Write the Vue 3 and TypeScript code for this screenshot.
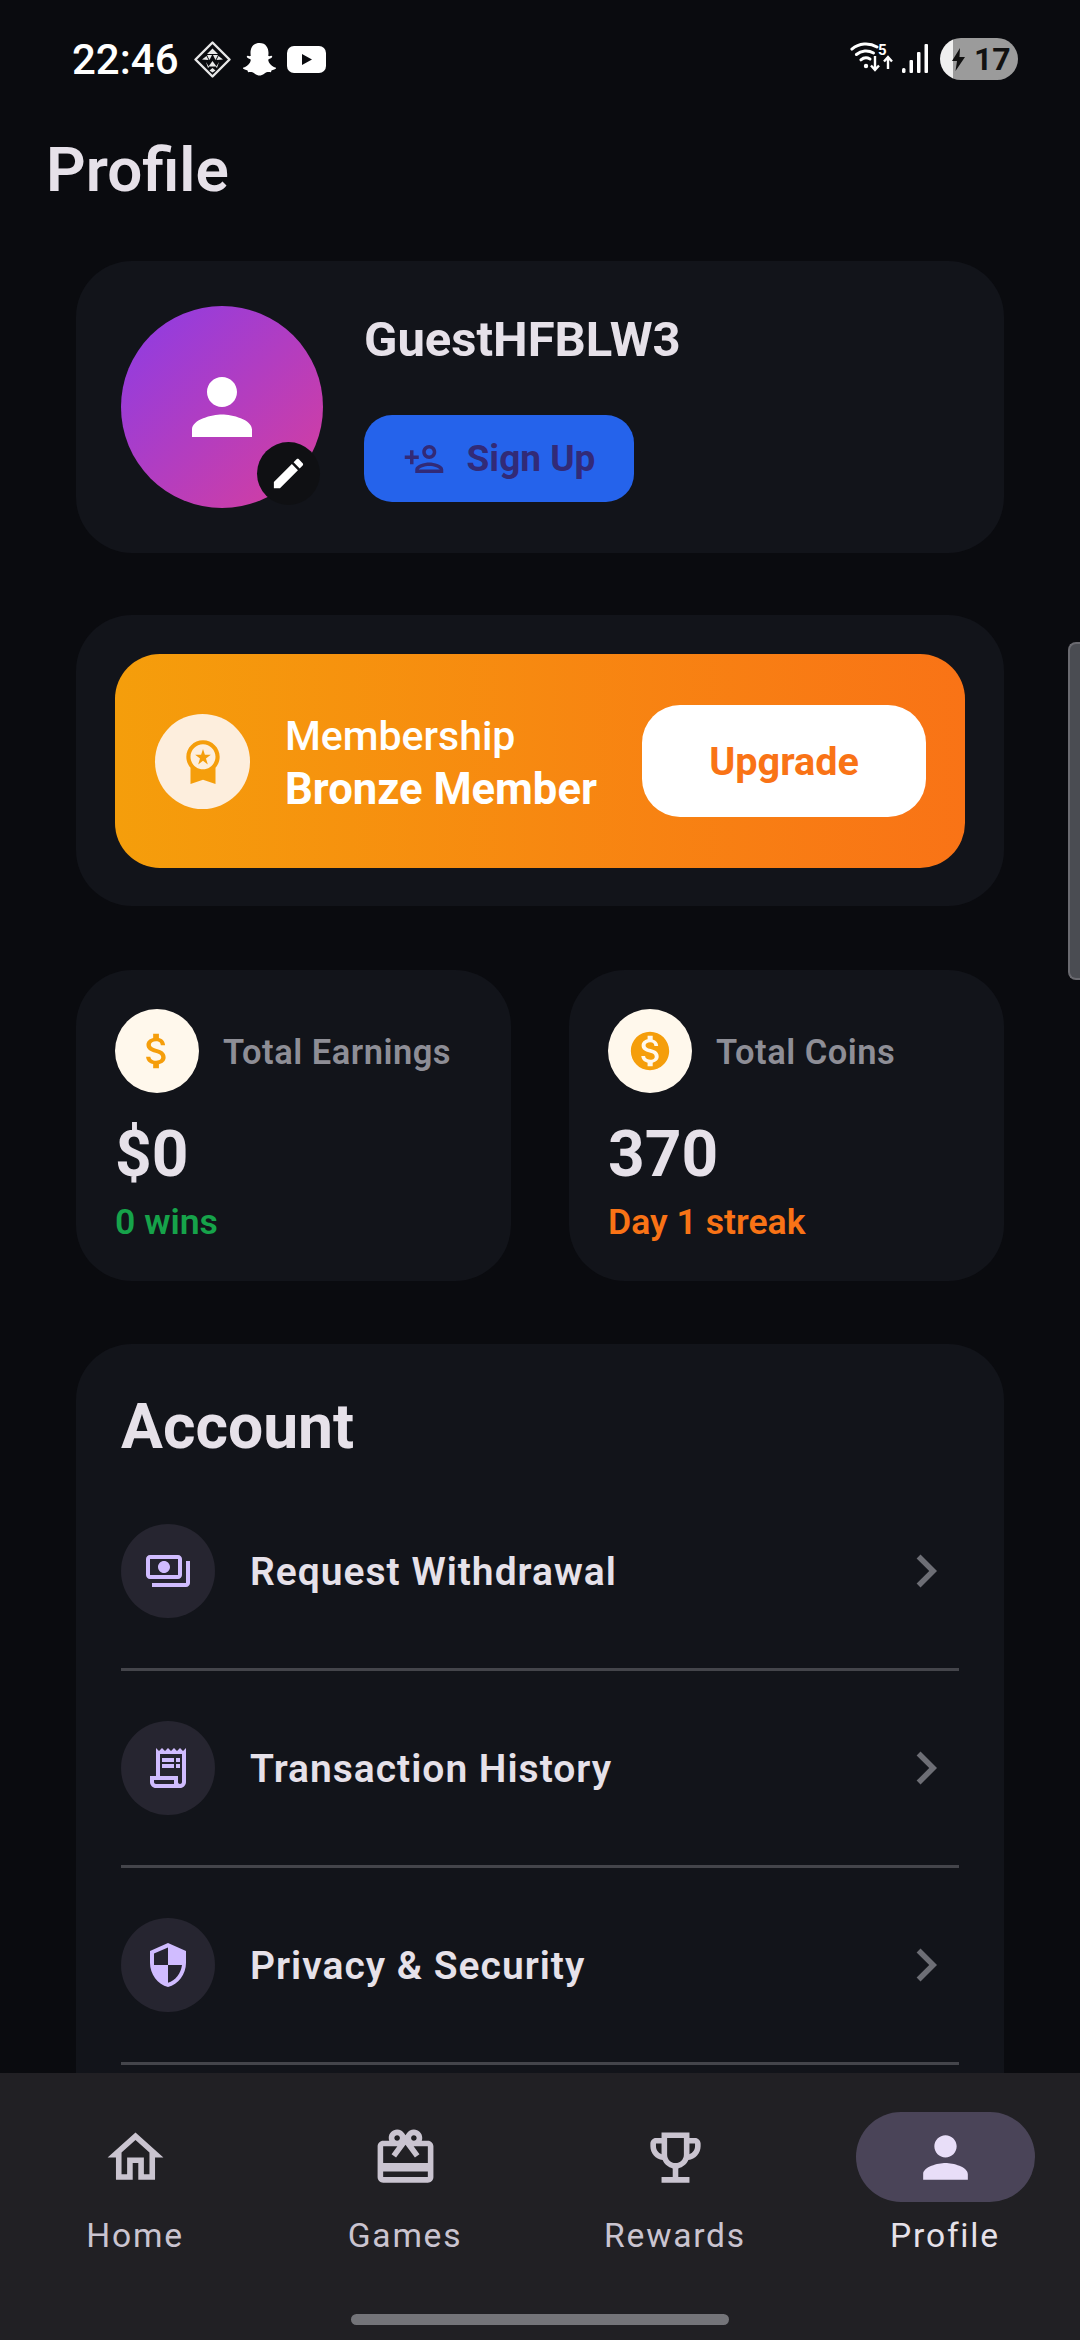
<script setup lang="ts">
const icons = {
  person: "M12 12c2.21 0 4-1.79 4-4s-1.79-4-4-4-4 1.79-4 4 1.79 4 4 4zm0 2c-2.67 0-8 1.34-8 4v2h16v-2c0-2.66-5.33-4-8-4z",
  edit: "M3 17.25V21h3.75L17.81 9.94l-3.75-3.75L3 17.25zM20.71 7.04c.39-.39.39-1.02 0-1.41l-2.34-2.34c-.39-.39-1.02-.39-1.41 0l-1.83 1.83 3.75 3.75 1.83-1.83z",
  personAdd: "M15 6c1.1 0 2 .9 2 2s-.9 2-2 2-2-.9-2-2 .9-2 2-2m0 10c2.7 0 5.8 1.29 6 2H9c.23-.72 3.31-2 6-2M15 4c-2.21 0-4 1.79-4 4s1.79 4 4 4 4-1.79 4-4-1.79-4-4-4zm0 10c-2.67 0-8 1.34-8 4v2h16v-2c0-2.66-5.33-4-8-4zM6 10V7H4v3H1v2h3v3h2v-3h3v-2H6z",
  medal: "M9.68 13.69 12 11.93l2.31 1.76-.88-2.85L15.75 9h-2.84L12 6.19 11.09 9H8.25l2.31 1.84-.88 2.85zM20 10c0-4.42-3.58-8-8-8s-8 3.58-8 8c0 2.03.76 3.87 2 5.28V23l6-2 6 2v-7.72c1.24-1.41 2-3.25 2-5.28zm-8-6c3.31 0 6 2.69 6 6s-2.69 6-6 6-6-2.69-6-6 2.69-6 6-6z",
  dollar: "M11.8 10.9c-2.27-.59-3-1.2-3-2.15 0-1.09 1.01-1.85 2.7-1.85 1.78 0 2.44.85 2.5 2.1h2.21c-.07-1.72-1.12-3.3-3.21-3.81V3h-3v2.16c-1.94.42-3.5 1.68-3.5 3.61 0 2.31 1.91 3.46 4.7 4.13 2.5.6 3 1.48 3 2.41 0 .69-.49 1.79-2.7 1.79-2.06 0-2.87-.92-2.98-2.1h-2.2c.12 2.19 1.76 3.42 3.68 3.83V21h3v-2.15c1.95-.37 3.5-1.5 3.5-3.55 0-2.84-2.43-3.81-4.7-4.4z",
  coin: "M12 2C6.48 2 2 6.48 2 12s4.48 10 10 10 10-4.48 10-10S17.52 2 12 2zm1.41 16.09V20h-2.67v-1.93c-1.71-.36-3.16-1.46-3.27-3.4h1.96c.1 1.05.82 1.87 2.65 1.87 1.96 0 2.4-.98 2.4-1.59 0-.83-.44-1.61-2.67-2.14-2.48-.6-4.18-1.62-4.18-3.67 0-1.72 1.39-2.84 3.11-3.21V4h2.67v1.95c1.86.45 2.79 1.86 2.85 3.39H14.3c-.05-1.11-.64-1.87-2.22-1.87-1.5 0-2.4.68-2.4 1.64 0 .84.65 1.39 2.67 1.91s4.18 1.39 4.18 3.91c-.01 1.83-1.38 2.83-3.12 3.16z",
  payments: "M19 14V6c0-1.1-.9-2-2-2H3c-1.1 0-2 .9-2 2v8c0 1.1.9 2 2 2h14c1.1 0 2-.9 2-2zm-2 0H3V6h14v8zm-7-7c-1.66 0-3 1.34-3 3s1.34 3 3 3 3-1.34 3-3-1.34-3-3-3zm13 0v11c0 1.1-.9 2-2 2H4v-2h17V7h2z",
  receipt: "M19.5 3.5 18 2l-1.5 1.5L15 2l-1.5 1.5L12 2l-1.5 1.5L9 2 7.5 3.5 6 2v14H3v3c0 1.66 1.34 3 3 3h12c1.66 0 3-1.34 3-3V2l-1.5 1.5zM19 19c0 .55-.45 1-1 1s-1-.45-1-1v-3H8V5h11v14zM9 7h6v2H9zM16 7h2v2h-2zM9 10h6v2H9zM16 10h2v2h-2zM6 20c-.55 0-1-.45-1-1v-1h10v2H6z",
  shield: "M12 1L3 5v6c0 5.55 3.84 10.74 9 12 5.16-1.26 9-6.45 9-12V5l-9-4zm0 10.99h7c-.53 4.12-3.28 7.79-7 8.94V12H5V6.3l7-3.11v8.8z",
  chevron: "M10 6L8.59 7.41 13.17 12l-4.58 4.59L10 18l6-6z",
  home: "M12 5.69l5 4.5V18h-2v-6H9v6H7v-7.81l5-4.5M12 3L2 12h3v8h6v-6h2v6h6v-8h3L12 3z",
  gift: "M20 6h-2.18c.11-.31.18-.65.18-1 0-1.66-1.34-3-3-3-1.05 0-1.96.54-2.5 1.35l-.5.67-.5-.68C10.96 2.54 10.05 2 9 2 7.34 2 6 3.34 6 5c0 .35.07.69.18 1H4c-1.11 0-1.99.89-1.99 2L2 19c0 1.11.89 2 2 2h16c1.11 0 2-.89 2-2V8c0-1.11-.89-2-2-2zm-5-2c.55 0 1 .45 1 1s-.45 1-1 1-1-.45-1-1 .45-1 1-1zM9 4c.55 0 1 .45 1 1s-.45 1-1 1-1-.45-1-1 .45-1 1-1zm11 15H4v-2h16v2zm0-5H4V8h5.08L7 10.83 8.62 12 11 8.76l1-1.36 1 1.36L15.38 12 17 10.83 14.92 8H20v6z",
  trophy: "M19 5h-2V3H7v2H5c-1.1 0-2 .9-2 2v1c0 2.55 1.92 4.63 4.39 4.94.63 1.5 1.98 2.63 3.61 2.96V19H7v2h10v-2h-4v-3.1c1.63-.33 2.98-1.46 3.61-2.96C19.08 12.63 21 10.55 21 8V7c0-1.1-.9-2-2-2zM5 8V7h2v3.82C5.84 10.4 5 9.3 5 8zm7 6c-1.65 0-3-1.35-3-3V5h6v6c0 1.65-1.35 3-3 3zm7-6c0 1.3-.84 2.4-2 2.82V7h2v1z",
};

const stats = [
  { label: "Total Earnings", value: "$0", note: "0 wins", noteClass: "green", icon: icons.dollar },
  { label: "Total Coins", value: "370", note: "Day 1 streak", noteClass: "orange", icon: icons.coin },
];

const rows = [
  { label: "Request Withdrawal", icon: icons.payments },
  { label: "Transaction History", icon: icons.receipt },
  { label: "Privacy & Security", icon: icons.shield },
];

const tabs = [
  { label: "Home", icon: icons.home, active: false },
  { label: "Games", icon: icons.gift, active: false },
  { label: "Rewards", icon: icons.trophy, active: false },
  { label: "Profile", icon: icons.person, active: true },
];
</script>

<template>
  <div class="screen">
    <div class="status">
      <div class="status-left">
        <span class="time">22:46</span>
        <svg class="diamond" width="37" height="37" viewBox="0 0 37 37">
          <path d="M18.5 1.5 35.5 18.5 18.5 35.5 1.5 18.5Z" fill="none" stroke="#e8e8e8" stroke-width="2.4" stroke-linejoin="round" />
          <path d="M18.5 7.5 24 13H13ZM13 14h5l-2.500 5ZM19 14h5l-2.500 5ZM8 18.500l4.500-3.500 2 4ZM29 18.500l-4.500-3.500-2 4ZM18.500 20l4 5.500h-8ZM12 21l3 5-1 1ZM25 21l-3 5 1 1ZM18.500 27l3 2.500-3 2-3-2Z" fill="#e8e8e8" />
        </svg>
        <svg class="snap" width="35" height="34" viewBox="0 0 35 34">
          <path fill="#fff" d="M17.500 1C24 1 26.500 6 26.500 11L26.300 14C27.500 14.500 29 13.500 29.800 14C31 14.800 29.500 16.300 27 17C26 17.300 26 18.500 27 20.500C28.500 23 31 25 34 25.800C34.500 26.800 32.500 27.800 30 28.200C29 28.400 29.500 30 28.500 30.200C26 30 24.500 30 22.500 31.500C20.500 33 19 33.500 17.500 33.500C16 33.500 14.500 33 12.500 31.500C10.500 30 9 30 6.500 30.200C5.500 30 6 28.400 5 28.200C2.500 27.800 .5 26.800 1 25.800C4 25 6.500 23 8 20.500C9 18.500 9 17.300 8 17C5.500 16.300 4 14.800 5.200 14C6 13.500 7.500 14.500 8.700 14L8.500 11C8.500 6 11 1 17.500 1Z" />
        </svg>
        <svg class="yt" width="39" height="27" viewBox="0 0 39 27">
          <rect width="39" height="27" rx="7" fill="#fff" />
          <path d="M15 8 25 13.500 15 19Z" fill="#0a0b0f" />
        </svg>
      </div>
      <div class="status-right">
        <svg width="50" height="36" viewBox="0 0 50 36">
          <g fill="none" stroke="#fff" stroke-width="3" stroke-linecap="round">
            <path d="M1.900 8.100A22 22 0 0 1 27 6" />
            <path d="M6.400 13.500A15 15 0 0 1 23.500 12" />
            <path d="M10.900 18.900A8 8 0 0 1 20 18" />
          </g>
          <circle cx="16" cy="25" r="2.200" fill="#fff" />
          <path d="M25 15v13M21 24.500l4 4.500 4-4.500M38 28V17M34 20.500l4-4.500 4 4.500" fill="none" stroke="#fff" stroke-width="2.400" />
          <text x="28" y="14" class="wifi-five">5</text>
        </svg>
        <svg class="signal" width="27" height="30" viewBox="0 0 27 30">
          <rect x="0" y="24" width="3.500" height="5" rx="1.500" fill="#fff" />
          <rect x="7.500" y="16" width="3.500" height="13" rx="1" fill="#fff" />
          <rect x="15" y="8" width="3.500" height="21" rx="1" fill="#fff" />
          <rect x="22.500" y="0" width="3.500" height="29" rx="1" fill="#fff" />
        </svg>
        <div class="battery">
          <svg width="13" height="23" viewBox="0 0 13 23">
            <path d="M8 0 0 13h5l-1.500 10L13 9H7.500Z" fill="#111" />
          </svg>
          <span>17</span>
        </div>
      </div>
    </div>

    <main class="content">
      <h1 class="title">Profile</h1>

      <section class="card user">
        <div class="avatar">
          <svg width="90" height="90" viewBox="0 0 24 24"><path :d="icons.person" fill="#fff" /></svg>
          <span class="edit">
            <svg width="39" height="39" viewBox="0 0 24 24"><path :d="icons.edit" fill="#fff" /></svg>
          </span>
        </div>
        <div class="user-info">
          <div class="name">GuestHFBLW3</div>
          <button class="signup">
            <svg width="42" height="42" viewBox="0 0 24 24"><path :d="icons.personAdd" fill="#322a77" fill-rule="evenodd" /></svg>
            Sign Up
          </button>
        </div>
      </section>

      <section class="card member-card">
        <div class="member">
          <span class="member-icon">
            <svg width="50" height="50" viewBox="0 0 24 24"><path :d="icons.medal" fill="#f59e0b" fill-rule="evenodd" /></svg>
          </span>
          <div class="member-text">
            <div class="member-label">Membership</div>
            <div class="member-level">Bronze Member</div>
          </div>
          <button class="upgrade">Upgrade</button>
        </div>
      </section>

      <div class="stats">
        <section v-for="stat in stats" :key="stat.label" class="card stat">
          <div class="stat-head">
            <span class="stat-icon">
              <svg width="46" height="46" viewBox="0 0 24 24"><path :d="stat.icon" fill="#f59e0b" fill-rule="evenodd" /></svg>
            </span>
            <span class="stat-label">{{ stat.label }}</span>
          </div>
          <div class="stat-value">{{ stat.value }}</div>
          <div class="stat-note" :class="stat.noteClass">{{ stat.note }}</div>
        </section>
      </div>

      <section class="card account">
        <h2 class="account-title">Account</h2>
        <div v-for="row in rows" :key="row.label" class="row">
          <span class="row-icon">
            <svg width="48" height="48" viewBox="0 0 24 24"><path :d="row.icon" fill="#d0bcff" fill-rule="evenodd" /></svg>
          </span>
          <span class="row-label">{{ row.label }}</span>
          <svg class="chevron" width="66" height="66" viewBox="0 0 24 24"><path :d="icons.chevron" fill="#6d6e75" /></svg>
        </div>
      </section>
    </main>

    <div class="scrollbar"></div>

    <nav class="nav">
      <div class="tabs">
        <div v-for="tab in tabs" :key="tab.label" class="tab" :class="{ active: tab.active }">
          <span class="tab-pill">
            <svg width="67" height="67" viewBox="0 0 24 24"><path :d="tab.icon" fill="currentColor" fill-rule="evenodd" /></svg>
          </span>
          <span class="tab-label">{{ tab.label }}</span>
        </div>
      </div>
      <div class="handle"></div>
    </nav>
  </div>
</template>

<style>
html,
body {
  margin: 0;
  background: #0a0b0f;
}
</style>

<style scoped>
.screen {
  position: relative;
  width: 1080px;
  height: 2340px;
  display: flex;
  flex-direction: column;
  overflow: hidden;
  background: #0a0b0f;
  font-family: Roboto, "Liberation Sans", sans-serif;
  color: #e6e1e9;
}
.status {
  height: 118px;
  flex-shrink: 0;
  display: flex;
  align-items: center;
  justify-content: space-between;
  padding: 0 62px 0 72px;
  box-sizing: border-box;
}
.status-left,
.status-right {
  display: flex;
  align-items: center;
}
.time {
  font-size: 42px;
  font-weight: 500;
  color: #fff;
  width: 105px;
}
.diamond {
  margin-left: 17px;
}
.snap {
  margin-left: 11px;
}
.yt {
  margin-left: 10px;
}
.wifi-five {
  font-family: Roboto, sans-serif;
  font-size: 15px;
  font-weight: 700;
  fill: #fff;
}
.signal {
  margin-left: 2px;
}
.battery {
  width: 78px;
  height: 42px;
  margin-left: 11px;
  border-radius: 21px;
  background: linear-gradient(90deg, #efefef 17%, #9b9b9b 17%);
  display: flex;
  align-items: center;
  box-sizing: border-box;
  padding-left: 12px;
  gap: 9px;
  color: #111;
  font-size: 32px;
  font-weight: 700;
}
.content {
  flex: 1;
  min-height: 0;
  display: flex;
  flex-direction: column;
  padding: 0 76px;
}
.title {
  margin: 0 0 39px -30px;
  height: 104px;
  line-height: 104px;
  font-size: 62px;
  font-weight: 600;
}
.card {
  background: #12141a;
  border-radius: 56px;
  flex-shrink: 0;
}
.user {
  display: flex;
  gap: 41px;
  padding: 45px;
}
.avatar {
  position: relative;
  width: 202px;
  height: 202px;
  border-radius: 50%;
  display: flex;
  align-items: center;
  justify-content: center;
  background: linear-gradient(135deg, #8b3ce6, #d83e9c);
}
.edit {
  position: absolute;
  right: 3px;
  bottom: 3px;
  width: 63px;
  height: 63px;
  border-radius: 50%;
  display: flex;
  align-items: center;
  justify-content: center;
  background: #0f1013;
}
.user-info {
  display: flex;
  flex-direction: column;
  align-items: flex-start;
}
.name {
  height: 67px;
  line-height: 67px;
  font-size: 49px;
  font-weight: 700;
  margin-bottom: 42px;
}
.signup {
  width: 270px;
  height: 87px;
  border: 0;
  border-radius: 28px;
  background: #2563eb;
  color: #322a77;
  display: flex;
  align-items: center;
  justify-content: center;
  gap: 22px;
  padding: 0;
  font-family: inherit;
  font-size: 37px;
  font-weight: 700;
}
.member-card {
  margin-top: 62px;
  padding: 39px 39px 38px;
}
.member {
  height: 214px;
  border-radius: 45px;
  background: linear-gradient(90deg, #f59e0b, #f97316);
  display: flex;
  align-items: center;
  padding: 0 39px 0 40px;
}
.member-icon {
  width: 95px;
  height: 95px;
  flex-shrink: 0;
  border-radius: 50%;
  background: #fdeedd;
  display: flex;
  align-items: center;
  justify-content: center;
}
.member-text {
  margin-left: 35px;
  padding-top: 3px;
  color: #fff;
  line-height: 53px;
}
.member-label {
  font-size: 41px;
  font-weight: 500;
}
.member-level {
  font-size: 43.6px;
  font-weight: 700;
}
.upgrade {
  width: 284px;
  height: 112px;
  margin-left: auto;
  border: 0;
  border-radius: 38px;
  background: #fff;
  color: #f97316;
  font-family: inherit;
  font-size: 39.6px;
  font-weight: 700;
}
.stats {
  margin-top: 64px;
  display: grid;
  grid-template-columns: 435px 435px;
  justify-content: space-between;
  flex-shrink: 0;
}
.stat {
  padding: 39px 39px 37px;
  height: 311px;
  box-sizing: border-box;
}
.stat-head {
  display: flex;
  align-items: center;
  gap: 24px;
}
.stat-icon {
  width: 84px;
  height: 84px;
  border-radius: 50%;
  background: #fff8ec;
  display: flex;
  align-items: center;
  justify-content: center;
}
.stat-label {
  padding-top: 2px;
  font-size: 34.5px;
  font-weight: 600;
  letter-spacing: 0.5px;
  color: #8e8e96;
}
.stat-value {
  margin-top: 26px;
  line-height: 72px;
  font-size: 64px;
  font-weight: 700;
}
.stat-note {
  margin-top: 9px;
  line-height: 44px;
  font-size: 35.6px;
  font-weight: 600;
}
.green {
  color: #16a34a;
}
.orange {
  color: #f97316;
}
.account {
  flex: 1;
  margin-top: 63px;
  padding: 47px 45px 0;
  border-radius: 56px 56px 0 0;
}
.account-title {
  margin: 0 0 11px;
  line-height: 72px;
  font-size: 62.4px;
  font-weight: 700;
}
.row {
  display: flex;
  align-items: center;
  gap: 35px;
  padding: 50px 0;
  border-bottom: 3px solid #44454b;
}
.row-icon {
  width: 94px;
  height: 94px;
  border-radius: 50%;
  background: #262530;
  display: flex;
  align-items: center;
  justify-content: center;
}
.row-label {
  padding-top: 2px;
  font-size: 39px;
  font-weight: 600;
  letter-spacing: 1px;
}
.chevron {
  margin-left: auto;
}
.scrollbar {
  position: absolute;
  top: 642px;
  right: 0;
  width: 12px;
  height: 338px;
  box-sizing: border-box;
  border: 2px solid #6a6a70;
  border-right: 0;
  border-radius: 8px 0 0 8px;
  background: #4a4c52;
}
.nav {
  height: 267px;
  flex-shrink: 0;
  background: #212024;
  display: flex;
  flex-direction: column;
}
.tabs {
  display: grid;
  grid-template-columns: repeat(4, 1fr);
  padding-top: 39px;
}
.tab {
  display: flex;
  flex-direction: column;
  align-items: center;
  color: #cac4d0;
}
.tab-pill {
  width: 179px;
  height: 90px;
  border-radius: 45px;
  display: flex;
  align-items: center;
  justify-content: center;
}
.tab-label {
  margin-top: 12px;
  line-height: 44px;
  font-size: 33.6px;
  font-weight: 400;
  letter-spacing: 1.8px;
}
.active .tab-pill {
  background: #4a4458;
  color: #e8def8;
}
.active .tab-label {
  color: #e6e1e9;
}
.handle {
  width: 378px;
  height: 11px;
  margin: 56px auto 0;
  border-radius: 6px;
  background: #747479;
}
</style>
